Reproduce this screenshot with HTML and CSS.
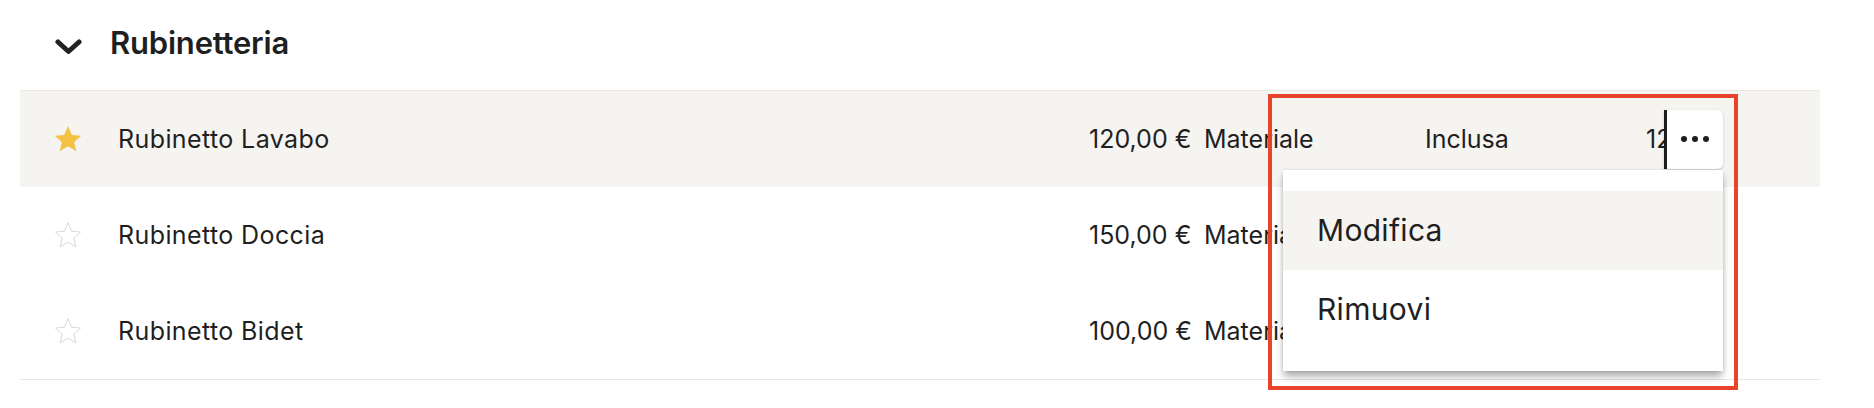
FILE: index.html
```html
<!DOCTYPE html>
<html lang="it">
<head>
    <meta charset="UTF-8">
    <meta name="viewport" content="width=device-width, initial-scale=1.0">
    <title>Rubinetteria</title>
    <link rel="stylesheet" href="styles.css">
</head>
<body>
    <section class="section">
        <div class="section-header">
            <svg class="chevron" width="27" height="17" viewBox="0 0 27 17">
                <polyline points="3,4 13.5,13.5 24,4" fill="none" stroke="#222" stroke-width="5" stroke-linecap="round" stroke-linejoin="round"/>
            </svg>
            <h2 class="section-title">Rubinetteria</h2>
        </div>

        <div class="rows">
            <div class="row row-active">
                <div class="cell-star">
                    <svg width="30" height="30" viewBox="0 0 24 24">
                        <path d="M12 1.5l3.1 7.2 7.6.6-5.8 5 1.8 7.5L12 17.8l-6.7 4 1.8-7.5-5.8-5 7.6-.6z" fill="#f4c145"/>
                    </svg>
                </div>
                <div class="cell-name">Rubinetto Lavabo</div>
                <div class="cell-price">120,00 €</div>
                <div class="cell-type">Materiale</div>
                <div class="cell-vat">Inclusa</div>
                <div class="cell-qty">120</div>
                <div class="cell-actions">
                    <button class="more-button" aria-label="Azioni">
                        <span class="dot"></span><span class="dot"></span><span class="dot"></span>
                    </button>
                    <div class="menu">
                        <div class="menu-item menu-item-hover">Modifica</div>
                        <div class="menu-item">Rimuovi</div>
                    </div>
                </div>
            </div>
            <div class="row">
                <div class="cell-star">
                    <svg width="30" height="30" viewBox="0 0 24 24">
                        <path d="M12 2.2l2.9 6.8 7.2.6-5.5 4.8 1.7 7.1L12 17.7l-6.3 3.8 1.7-7.1-5.5-4.8 7.2-.6z" fill="none" stroke="#dcd9d5" stroke-width="0.8" stroke-linejoin="round"/>
                    </svg>
                </div>
                <div class="cell-name">Rubinetto Doccia</div>
                <div class="cell-price">150,00 €</div>
                <div class="cell-type">Materiale</div>
                <div class="cell-vat">Inclusa</div>
                <div class="cell-qty">150</div>
                <div class="cell-actions"></div>
            </div>
            <div class="row">
                <div class="cell-star">
                    <svg width="30" height="30" viewBox="0 0 24 24">
                        <path d="M12 2.2l2.9 6.8 7.2.6-5.5 4.8 1.7 7.1L12 17.7l-6.3 3.8 1.7-7.1-5.5-4.8 7.2-.6z" fill="none" stroke="#dcd9d5" stroke-width="0.8" stroke-linejoin="round"/>
                    </svg>
                </div>
                <div class="cell-name">Rubinetto Bidet</div>
                <div class="cell-price">100,00 €</div>
                <div class="cell-type">Materiale</div>
                <div class="cell-vat">Inclusa</div>
                <div class="cell-qty">100</div>
                <div class="cell-actions"></div>
            </div>
        </div>
    </section>

    <!-- cornice di evidenziazione -->
    <div class="highlight"></div>
</body>
</html>
```

FILE: styles.css
```css
/* Base */
* {
    margin: 0;
    padding: 0;
    box-sizing: border-box;
}

body {
    background: #ffffff;
    font-family: 'Inter', 'Liberation Sans', sans-serif;
    color: #1f1f1f;
    width: 1874px;
    height: 408px;
    overflow: hidden;
}

/* Sezione */
.section {
    padding: 0 54px 0 20px;
}

.section-header {
    display: flex;
    align-items: center;
    gap: 28px;
    height: 90px;
    padding: 0 0 6px 35px;
}

.chevron {
    margin-top: 8px;
}

.section-title {
    font-size: 31px;
    font-weight: 600;
    letter-spacing: -0.2px;
}

/* Righe */
.rows {
    border-top: 1px solid #e9e6e1;
    border-bottom: 1px solid #e9e6e1;
}

.row {
    display: grid;
    grid-template-columns: 98px 971px 115px 221px 221px 18px 59px 1fr;
    align-items: center;
    height: 96px;
    font-size: 25px;
}

.row-active {
    background: #f6f4f1;
}

.cell-star {
    display: flex;
    padding-left: 33px;
}

.cell-name {
    letter-spacing: 0.4px;
}

.cell-qty {
    overflow: hidden;
    white-space: nowrap;
}

.cell-actions {
    position: relative;
    height: 59px;
}

/* Bottone azioni */
.more-button {
    display: flex;
    align-items: center;
    justify-content: center;
    gap: 5px;
    width: 59px;
    height: 59px;
    background: #ffffff;
    border: none;
    border-left: 3px solid #1d1d1d;
    border-radius: 0 6px 6px 0;
    box-shadow: 0 1px 3px rgba(0, 0, 0, 0.18);
    cursor: pointer;
}

.dot {
    width: 6px;
    height: 6px;
    border-radius: 50%;
    background: #1d1d1d;
}

/* Menu */
.menu {
    position: absolute;
    top: 60px;
    right: 0;
    width: 440px;
    padding: 21px 0 22px;
    background: #ffffff;
    box-shadow: 0 0 3px rgba(0, 0, 0, 0.12), 0 6px 8px -1px rgba(0, 0, 0, 0.35);
    letter-spacing: 0.3px;
    z-index: 2;
}

.menu-item {
    display: flex;
    align-items: center;
    height: 79px;
    padding-left: 34px;
    font-size: 30px;
}

.menu-item-hover {
    background: #f6f4f1;
}

/* Cornice rossa */
.highlight {
    position: absolute;
    left: 1268px;
    top: 94px;
    width: 470px;
    height: 296px;
    border: 4px solid #e8432b;
    z-index: 3;
}
```
